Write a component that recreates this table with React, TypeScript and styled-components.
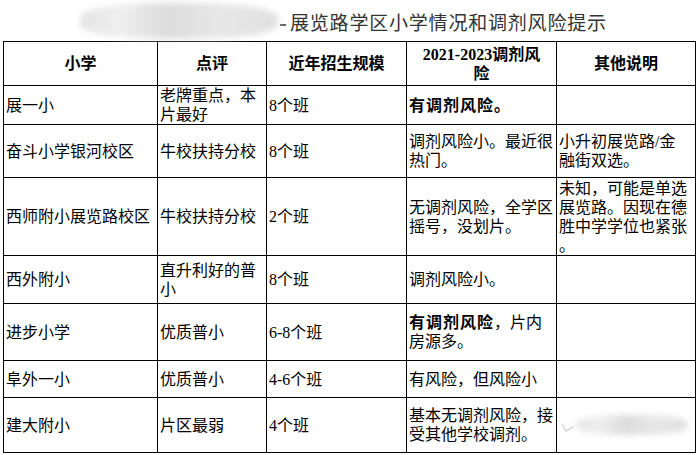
import React from "react";
import styled, { createGlobalStyle } from "styled-components";

const Global = createGlobalStyle`
  html, body { margin: 0; padding: 0; background: #fff; }
  body { width: 698px; height: 455px; overflow: hidden; }
`;

const Page = styled.div`
  width: 698px;
  height: 455px;
  background: #fff;
  display: flex;
  flex-direction: column;
`;

const TitleBar = styled.div`
  height: 41px;
  display: flex;
  align-items: center;
  padding-left: 80px;
  box-sizing: border-box;
`;

const Blur = styled.div<{ $w: number; $h: number }>`
  width: ${(p) => p.$w}px;
  height: ${(p) => p.$h}px;
  border-radius: 40%;
  background: linear-gradient(90deg, #e4e4e4 0%, #efefef 20%, #dcdcdc 45%, #e8e8e8 70%, #e0e0e0 100%);
  filter: blur(3px);
  flex: none;
`;

const Dot = styled.span`
  width: 6px;
  height: 2px;
  background: #666;
  margin: 8px 4px 0 2px;
  flex: none;
`;

const TitleText = styled.div`
  font-family: "Noto Sans CJK SC", sans-serif;
  font-size: 19px;
  letter-spacing: 0.8px;
  color: #333;
  margin-top: 2px;
  white-space: nowrap;
`;

const Table = styled.table`
  margin-left: 3px;
  border-collapse: collapse;
  table-layout: fixed;
  width: 692px;
  font-family: "Liberation Serif", "Noto Sans CJK SC", serif;
  font-size: 16px;
  line-height: 19px;
  color: #000;
  line-break: anywhere;
`;

const Row = styled.tr<{ $h: number }>`
  height: ${(p) => p.$h}px;
`;

const Th = styled.th`
  border: 1px solid #000;
  font-weight: bold;
  text-align: center;
  vertical-align: middle;
  padding: 0 8px;
`;

const Td = styled.td<{ $padR?: number }>`
  border: 1px solid #000;
  text-align: left;
  vertical-align: middle;
  padding: 0 ${(p) => p.$padR ?? 2}px 0 2px;
  overflow: hidden;
`;

const B = styled.b`
  font-weight: bold;
  letter-spacing: 1px;
`;

const CellBlur = styled.div`
  display: flex;
  align-items: center;
  gap: 4px;
  padding-left: 4px;
`;

const Tick = styled.span`
  width: 8px;
  height: 8px;
  border-left: 1px solid #aaa;
  border-bottom: 1px solid #aaa;
  transform: rotate(-30deg);
  opacity: 0.6;
  flex: none;
`;

type R = { h: number; a: React.ReactNode; b: React.ReactNode; c: React.ReactNode; d: React.ReactNode; e: React.ReactNode };

const rows: R[] = [
  { h: 38, a: "展一小", b: "老牌重点，本片最好", c: "8个班", d: <B>有调剂风险。</B>, e: "" },
  { h: 53, a: "奋斗小学银河校区", b: "牛校扶持分校", c: "8个班", d: "调剂风险小。最近很热门。", e: "小升初展览路/金融街双选。" },
  { h: 78, a: "西师附小展览路校区", b: "牛校扶持分校", c: "2个班", d: "无调剂风险，全学区摇号，没划片。", e: "未知，可能是单选展览路。因现在德胜中学学位也紧张。" },
  { h: 48, a: "西外附小", b: "直升利好的普小", c: "8个班", d: "调剂风险小。", e: "" },
  { h: 57, a: "进步小学", b: "优质普小", c: "6-8个班", d: <><B>有调剂风险</B>，片内房源多。</>, e: "" },
  { h: 37, a: "阜外一小", b: "优质普小", c: "4-6个班", d: "有风险，但风险小", e: "" },
  {
    h: 55, a: "建大附小", b: "片区最弱", c: "4个班", d: "基本无调剂风险，接受其他学校调剂。",
    e: (<CellBlur><Tick /><Blur $w={112} $h={20} /></CellBlur>),
  },
];

export default function App() {
  return (
    <Page>
      <Global />
      <TitleBar>
        <Blur $w={198} $h={36} />
        <Dot />
        <TitleText>展览路学区小学情况和调剂风险提示</TitleText>
      </TitleBar>
      <Table>
        <colgroup>
          <col style={{ width: 154 }} />
          <col style={{ width: 109 }} />
          <col style={{ width: 140 }} />
          <col style={{ width: 150 }} />
          <col style={{ width: 139 }} />
        </colgroup>
        <thead>
          <Row $h={44}>
            <Th>小学</Th>
            <Th>点评</Th>
            <Th>近年招生规模</Th>
            <Th>2021-2023调剂风险</Th>
            <Th>其他说明</Th>
          </Row>
        </thead>
        <tbody>
          {rows.map((r, i) => (
            <Row key={i} $h={r.h}>
              <Td>{r.a}</Td>
              <Td>{r.b}</Td>
              <Td>{r.c}</Td>
              <Td>{r.d}</Td>
              <Td $padR={5}>{r.e}</Td>
            </Row>
          ))}
        </tbody>
      </Table>
    </Page>
  );
}
